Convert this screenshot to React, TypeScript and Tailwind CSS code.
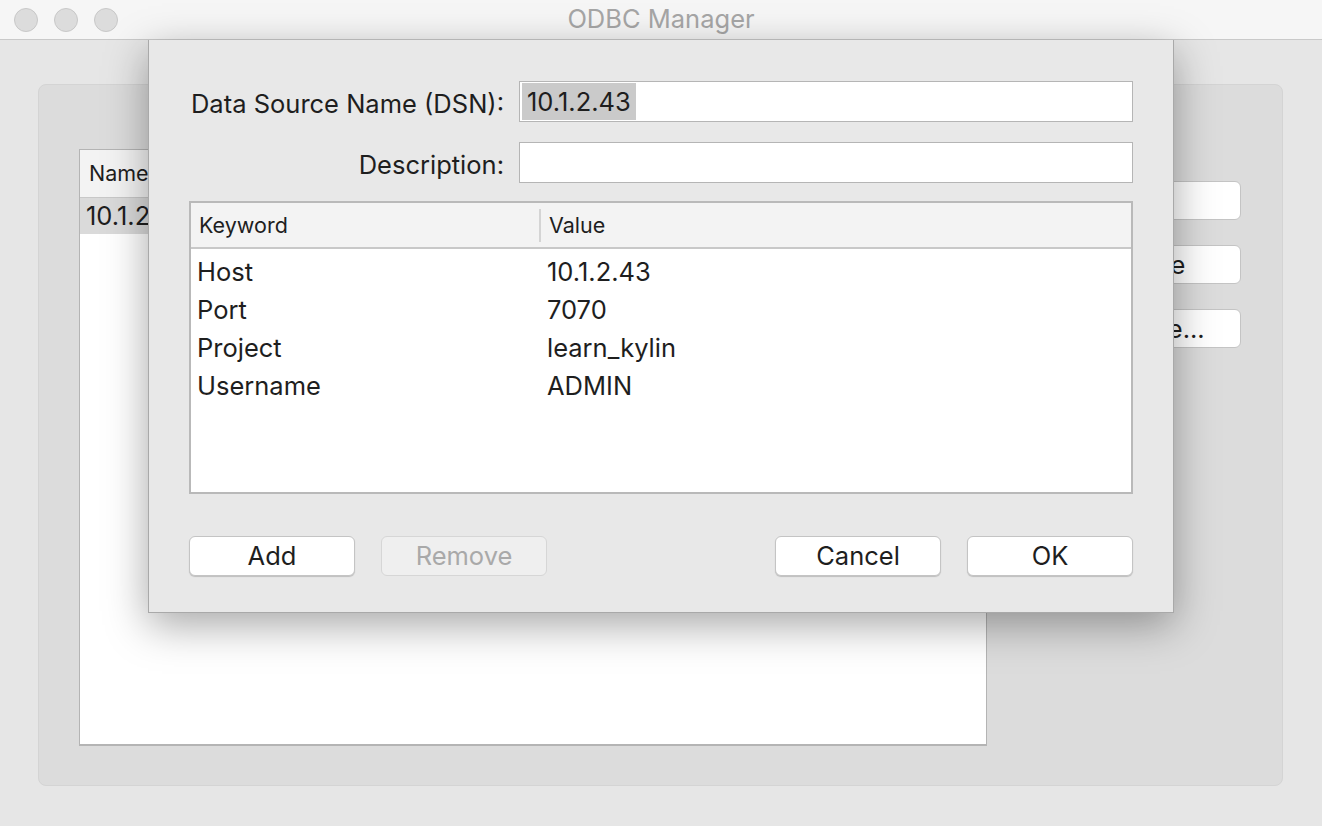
import React from "react";

const rows = [
  { key: "Host", value: "10.1.2.43" },
  { key: "Port", value: "7070" },
  { key: "Project", value: "learn_kylin" },
  { key: "Username", value: "ADMIN" },
];

const Btn: React.FC<{ label: string; disabled?: boolean }> = ({ label, disabled }) => (
  <button
    className={
      disabled
        ? "w-[166px] h-[40px] rounded-[6px] border border-[#d6d6d6] bg-[#efefef] text-[25.5px] text-[#a9a9a9]"
        : "w-[166px] h-[40px] rounded-[6px] border border-[#c4c4c4] bg-white text-[25.5px] text-[#1e1e1e] shadow-[0_1px_1px_rgba(0,0,0,0.18)]"
    }
  >
    {label}
  </button>
);

const App: React.FC = () => {
  return (
    <div className="relative w-[1322px] h-[826px] overflow-hidden bg-[#e6e6e6] font-['Inter',sans-serif] text-[#1e1e1e]">
      {/* title bar */}
      <div className="relative h-[40px] flex items-center border-b border-[#c9c9c9] bg-[#f6f6f6]">
        <div className="flex gap-[16px] pl-[14px]">
          <div className="w-[24px] h-[24px] rounded-full bg-[#dcdcdc] border border-[#c8c8c8]" />
          <div className="w-[24px] h-[24px] rounded-full bg-[#dcdcdc] border border-[#c8c8c8]" />
          <div className="w-[24px] h-[24px] rounded-full bg-[#dcdcdc] border border-[#c8c8c8]" />
        </div>
        <div className="absolute inset-0 flex items-center justify-center text-[25.5px] text-[#a6a6a6]">
          ODBC Manager
        </div>
      </div>

      {/* main window body */}
      <div className="pl-[38px] pr-[39px] pt-[44px]">
        <div className="h-[702px] rounded-[8px] border border-[#d4d4d4] bg-[#dcdcdc] pl-[40px] pr-[40px] pt-[64px] flex gap-[20px]">
          <div className="w-[908px] h-[597px] bg-white border border-[#b4b4b4] border-b-2">
            <div className="h-[48px] bg-[#f3f3f3] border-b border-[#c8c8c8] flex items-center pl-[9px] text-[21.5px]">
              Name
            </div>
            <div className="h-[36px] bg-[#dadada] flex items-center pl-[6px] text-[25.5px]">10.1.2.43</div>
          </div>
          <div className="flex flex-col gap-[25px] pt-[32px] w-[234px]">
            <button className="h-[39px] rounded-[6px] border border-[#c4c4c4] bg-white text-[25.5px]">Add</button>
            <button className="h-[39px] rounded-[6px] border border-[#c4c4c4] bg-white text-[25.5px] pl-[26px]">Remove</button>
            <button className="h-[39px] rounded-[6px] border border-[#c4c4c4] bg-white text-[25.5px] pl-[20px]">Configure...</button>
          </div>
        </div>
      </div>

      {/* sheet dialog */}
      <div className="absolute left-[148px] top-[40px] w-[1026px] h-[573px] bg-[#e8e8e8] border-l border-r border-b border-[#a9a9a9] shadow-[0_12px_40px_rgba(0,0,0,0.35)] px-[40px] pt-[41px]">
        <div className="flex items-center h-[41px]">
          <div className="w-[315px] text-right text-[25.5px] pt-[5px]">Data Source Name (DSN):</div>
          <div className="ml-[15px] w-[614px] h-[41px] bg-white border border-[#b5b5b5] flex items-center pl-[2px]">
            <span className="bg-[#cacaca] text-[25.5px] leading-[37px] px-[5px]">10.1.2.43</span>
          </div>
        </div>
        <div className="flex items-center h-[41px] mt-[20px]">
          <div className="w-[315px] text-right text-[25.5px] pt-[5px]">Description:</div>
          <div className="ml-[15px] w-[614px] h-[41px] bg-white border border-[#b5b5b5]" />
        </div>

        <div className="mt-[18px] w-[944px] h-[293px] bg-white border-2 border-[#b9b9b9]">
          <div className="h-[46px] bg-[#f3f3f3] border-b-2 border-[#c8c8c8] flex items-center text-[21.5px]">
            <div className="w-[348px] pl-[8px]">Keyword</div>
            <div className="h-[33px] border-l-2 border-[#d4d4d4] flex items-center pl-[8px]">Value</div>
          </div>
          <div className="pt-[4px]">
            {rows.map((r) => (
              <div key={r.key} className="h-[38px] flex items-center text-[25.5px]">
                <div className="w-[356px] pl-[6px]">{r.key}</div>
                <div>{r.value}</div>
              </div>
            ))}
          </div>
        </div>

        <div className="mt-[42px] flex justify-between">
          <div className="flex gap-[26px]">
            <Btn label="Add" />
            <Btn label="Remove" disabled />
          </div>
          <div className="flex gap-[26px]">
            <Btn label="Cancel" />
            <Btn label="OK" />
          </div>
        </div>
      </div>
    </div>
  );
};

export default App;
